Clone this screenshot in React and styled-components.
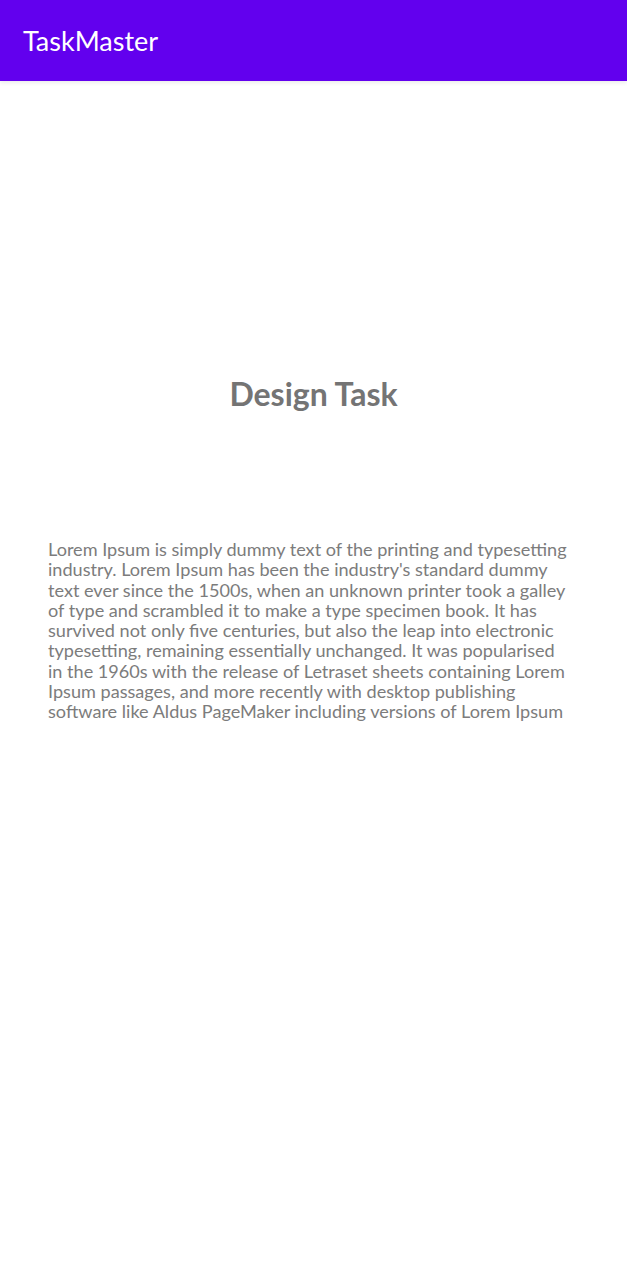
import React from "react";
import styled, { createGlobalStyle } from "styled-components";

const GlobalStyle = createGlobalStyle`
  html, body {
    margin: 0;
    padding: 0;
    background: #ffffff;
  }
  body {
    font-family: "Lato", "Noto Sans", sans-serif;
  }
`;

const lines = [
  "Lorem Ipsum is simply dummy text of the printing and typesetting",
  "industry. Lorem Ipsum has been the industry's standard dummy",
  "text ever since the 1500s, when an unknown printer took a galley",
  "of type and scrambled it to make a type specimen book. It has",
  "survived not only five centuries, but also the leap into electronic",
  "typesetting, remaining essentially unchanged. It was popularised",
  "in the 1960s with the release of Letraset sheets containing Lorem",
  "Ipsum passages, and more recently with desktop publishing",
  "software like Aldus PageMaker including versions of Lorem Ipsum",
];

export default function App() {
  return (
    <>
      <GlobalStyle />
      <Screen>
        <AppBar>
          <AppTitle>TaskMaster</AppTitle>
        </AppBar>
        <Content>
          <Heading>Design Task</Heading>
          <Body>
            {lines.map(l => (
              <Line key={l}>{l}</Line>
            ))}
          </Body>
        </Content>
      </Screen>
    </>
  );
}

const Screen = styled.div`
  width: 627px;
  min-height: 1280px;
  background: #ffffff;
`;
const AppBar = styled.header`
  height: 81px;
  background: #6200ee;
  display: flex;
  align-items: center;
  padding: 0 23px;
  box-shadow: 0 2px 4px rgba(0, 0, 0, 0.08);
`;
const AppTitle = styled.h1`
  margin: 0;
  font-size: 27px;
  font-weight: 400;
  color: #ffffff;
`;
const Content = styled.main`
  display: flex;
  flex-direction: column;
  padding: 0 48px;
`;
const Heading = styled.h2`
  margin: 291px 0 0;
  text-align: center;
  font-size: 32px;
  line-height: 44px;
  font-weight: 700;
  color: #747474;
`;
const Body = styled.div`
  margin-top: 123px;
  font-size: 18.1px;
  line-height: 20.25px;
  color: #7c7c7c;
`;
const Line = styled.div`
  white-space: nowrap;
`;
